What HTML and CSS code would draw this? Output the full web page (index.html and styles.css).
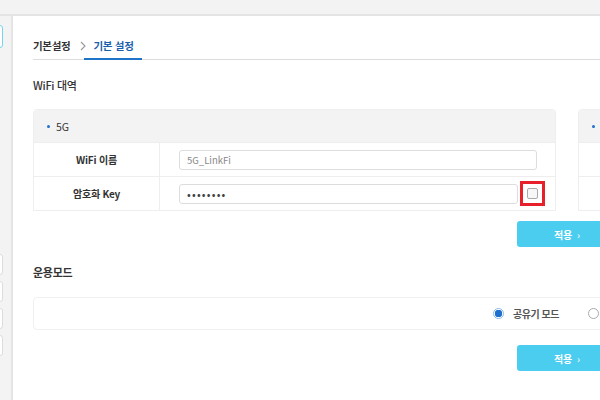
FILE: index.html
```html
<!DOCTYPE html>
<html lang="ko">
<head>
    <meta charset="UTF-8">
    <title>기본 설정</title>
    <link rel="stylesheet" href="styles.css">
</head>
<body>
    <div class="topbar"></div>
    <div class="layout">
        <div class="sidebar">
            <span class="side-btn active"></span>
            <div class="side-group">
                <span class="side-btn"></span>
                <span class="side-btn"></span>
                <span class="side-btn"></span>
                <span class="side-btn"></span>
            </div>
        </div>

        <div class="main">
            <div class="tabs">
                <span class="tab">기본설정</span>
                <svg class="chev" width="6" height="10" viewBox="0 0 6 10"><path d="M1 1l4 4-4 4" fill="none" stroke="#999" stroke-width="1.1"/></svg>
                <span class="tab active">기본 설정</span>
            </div>

            <h3 class="section-title light">WiFi 대역</h3>

            <div class="cards">
                <div class="card">
                    <div class="card-head"><span class="dot"></span>5G</div>
                    <div class="row">
                        <div class="label">WiFi 이름</div>
                        <div class="value">
                            <input class="field" type="text" value="5G_LinkFi">
                        </div>
                    </div>
                    <div class="row">
                        <div class="label">암호화 Key</div>
                        <div class="value">
                            <input class="field pw" type="password" value="12345678">
                            <span class="mark"><span class="check"></span></span>
                        </div>
                    </div>
                </div>
                <!-- 2.4G card, mostly off screen -->
                <div class="card">
                    <div class="card-head"><span class="dot"></span></div>
                    <div class="row">
                        <div class="label"></div>
                        <div class="value"></div>
                    </div>
                    <div class="row">
                        <div class="label"></div>
                        <div class="value"></div>
                    </div>
                </div>
            </div>

            <div class="actions">
                <button class="apply">적용 <span class="arr">&rsaquo;</span></button>
            </div>

            <h3 class="section-title">운용모드</h3>

            <div class="mode-box">
                <label class="radio"><span class="dot-radio on"></span>공유기 모드</label>
                <label class="radio"><span class="dot-radio"></span></label>
            </div>

            <div class="actions second">
                <button class="apply">적용 <span class="arr">&rsaquo;</span></button>
            </div>
        </div>
    </div>
</body>
</html>
```

FILE: styles.css
```css
* {
    box-sizing: border-box;
}

body {
    margin: 0;
    font-family: "Noto Sans CJK KR", "Noto Sans", sans-serif;
    color: #333;
    background: #fff;
    overflow: hidden;
    width: 600px;
    height: 400px;
}

.topbar {
    height: 16px;
    background: #f3f3f3;
    border-bottom: 2px solid #e4e4e4;
}

.layout {
    display: flex;
    height: 384px;
}

.sidebar {
    flex: none;
    width: 13px;
    background: #f3f3f3;
    border-right: 2px solid #e4e4e4;
    padding-top: 9px;
    overflow: hidden;
}

.side-btn {
    display: block;
    width: 40px;
    height: 21px;
    margin-left: -37px;
    border: 1px solid #ddd;
    border-radius: 3px;
    background: #fff;
}

.side-btn.active {
    height: 23px;
    border-color: #74d5f0;
}

.side-group {
    margin-top: 206px;
    display: flex;
    flex-direction: column;
    gap: 6px;
}

.main {
    flex: none;
    width: 1100px;
    padding: 22px 0 0 20px;
}

.tabs {
    display: flex;
    align-items: flex-start;
    border-bottom: 1px solid #ddd;
    font-size: 10.5px;
    font-weight: 700;
    line-height: 16px;
}

.tab {
    padding-bottom: 5px;
    letter-spacing: -0.3px;
}

.chev {
    margin: 3px 0 0 10px;
}

.tab.active {
    margin: 0 0 -1px -2px;
    padding: 0 8px 4px 9px;
    color: #1a5fae;
    border-bottom: 2px solid #1f74c8;
}

.section-title {
    margin: 17px 0 0;
    font-size: 11px;
    line-height: 16px;
    font-weight: 700;
    letter-spacing: -0.3px;
}

.section-title.light {
    font-weight: 500;
}

.cards {
    display: flex;
    gap: 22px;
    width: 1068px;
    margin-top: 16px;
}

.card {
    width: 523px;
    border: 1px solid #eee;
    border-radius: 4px 4px 0 0;
}

.card-head {
    height: 32px;
    background: #f3f3f3;
    display: flex;
    align-items: center;
    padding-left: 13px;
    font-size: 10.5px;
    border-radius: 4px 4px 0 0;
}

.dot {
    width: 3px;
    height: 3px;
    border-radius: 50%;
    background: #1f6fcf;
    margin-right: 6px;
}

.row {
    display: grid;
    grid-template-columns: 126px 1fr;
    height: 34px;
    border-top: 1px solid #eee;
}

.label {
    display: flex;
    align-items: center;
    justify-content: center;
    border-right: 1px solid #eee;
    font-size: 10px;
    font-weight: 700;
    letter-spacing: -0.2px;
}

.value {
    display: flex;
    align-items: center;
    padding: 0 18px 0 19px;
}

.field {
    flex: 1;
    min-width: 0;
    height: 20px;
    padding: 0 7px;
    border: 1px solid #ddd;
    border-radius: 3px;
    font-family: inherit;
    font-size: 9.5px;
    color: #888;
    outline: none;
}

.field.pw {
    color: #444;
    font-size: 11px;
    letter-spacing: 1.2px;
}

.value .mark {
    flex: none;
    width: 25px;
    height: 25px;
    margin: 0 -8px 0 2px;
    border: 3px solid #e8202b;
    display: flex;
    align-items: center;
    justify-content: center;
}

.check {
    width: 11px;
    height: 11px;
    border: 1px solid #aaa;
    border-radius: 2px;
    background: #f7f7f7;
}

.actions {
    display: flex;
    justify-content: center;
    width: 1068px;
    margin-top: 10px;
}

.actions.second {
    margin-top: 15px;
}

.apply {
    width: 100px;
    height: 26px;
    border: none;
    border-radius: 3px;
    background: #4bcdef;
    color: #fff;
    font-family: inherit;
    font-size: 10px;
    font-weight: 700;
    cursor: pointer;
}

.apply .arr {
    font-weight: 400;
    margin-left: 2px;
}

.mode-box {
    width: 1068px;
    height: 33px;
    margin-top: 17px;
    border: 1px solid #f0f0f0;
    border-radius: 4px;
    display: flex;
    align-items: center;
    justify-content: center;
    gap: 29px;
}

.radio {
    display: flex;
    align-items: center;
    font-size: 10px;
    font-weight: 700;
    letter-spacing: -0.5px;
    color: #555;
}

.radio:last-child {
    width: 53px;
}

.dot-radio {
    width: 11px;
    height: 11px;
    border-radius: 50%;
    border: 1px solid #aaa;
    margin-right: 9px;
    background: #fff;
}

.dot-radio.on {
    border-color: #8ab9ec;
    background: radial-gradient(circle, #1e6fce 0 3.5px, #fff 4px);
}
```
